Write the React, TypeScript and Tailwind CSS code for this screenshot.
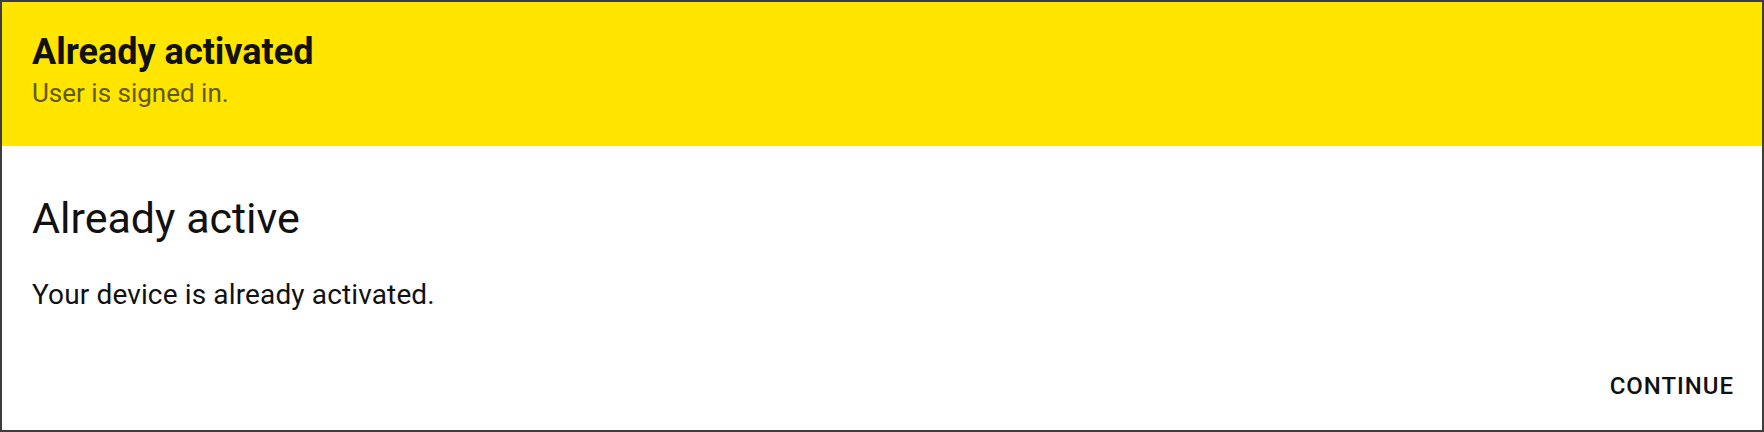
export default function App() {
  return (
    <main
      className="flex h-[432px] w-[1764px] flex-col border-2 border-[#3d3d3d] bg-white"
      style={{ fontFamily: "Roboto, 'Noto Sans', sans-serif" }}
    >
      <header className="flex h-[144px] flex-col bg-[#ffe500] px-[30px] pt-[29px]">
        <h1 className="text-[36px] font-bold leading-[42px] text-[#111111]">Already activated</h1>
        <p className="mt-[4px] text-[26px] leading-[32px] text-[#625900]">User is signed in.</p>
      </header>

      <section className="flex flex-1 flex-col pl-[30px] pr-[28px]">
        <h2 className="mt-[47px] text-[43px] leading-[50px] text-[#111111]">Already active</h2>
        <p className="mt-[34px] text-[28px] leading-[36px] tracking-[0.005em] text-[#111111]">
          Your device is already activated.
        </p>
        <div className="mt-auto flex justify-end pb-[30px]">
          <button className="text-[24px] font-medium uppercase leading-[28px] tracking-[0.04em] text-[#111111]">
            Continue
          </button>
        </div>
      </section>
    </main>
  );
}
